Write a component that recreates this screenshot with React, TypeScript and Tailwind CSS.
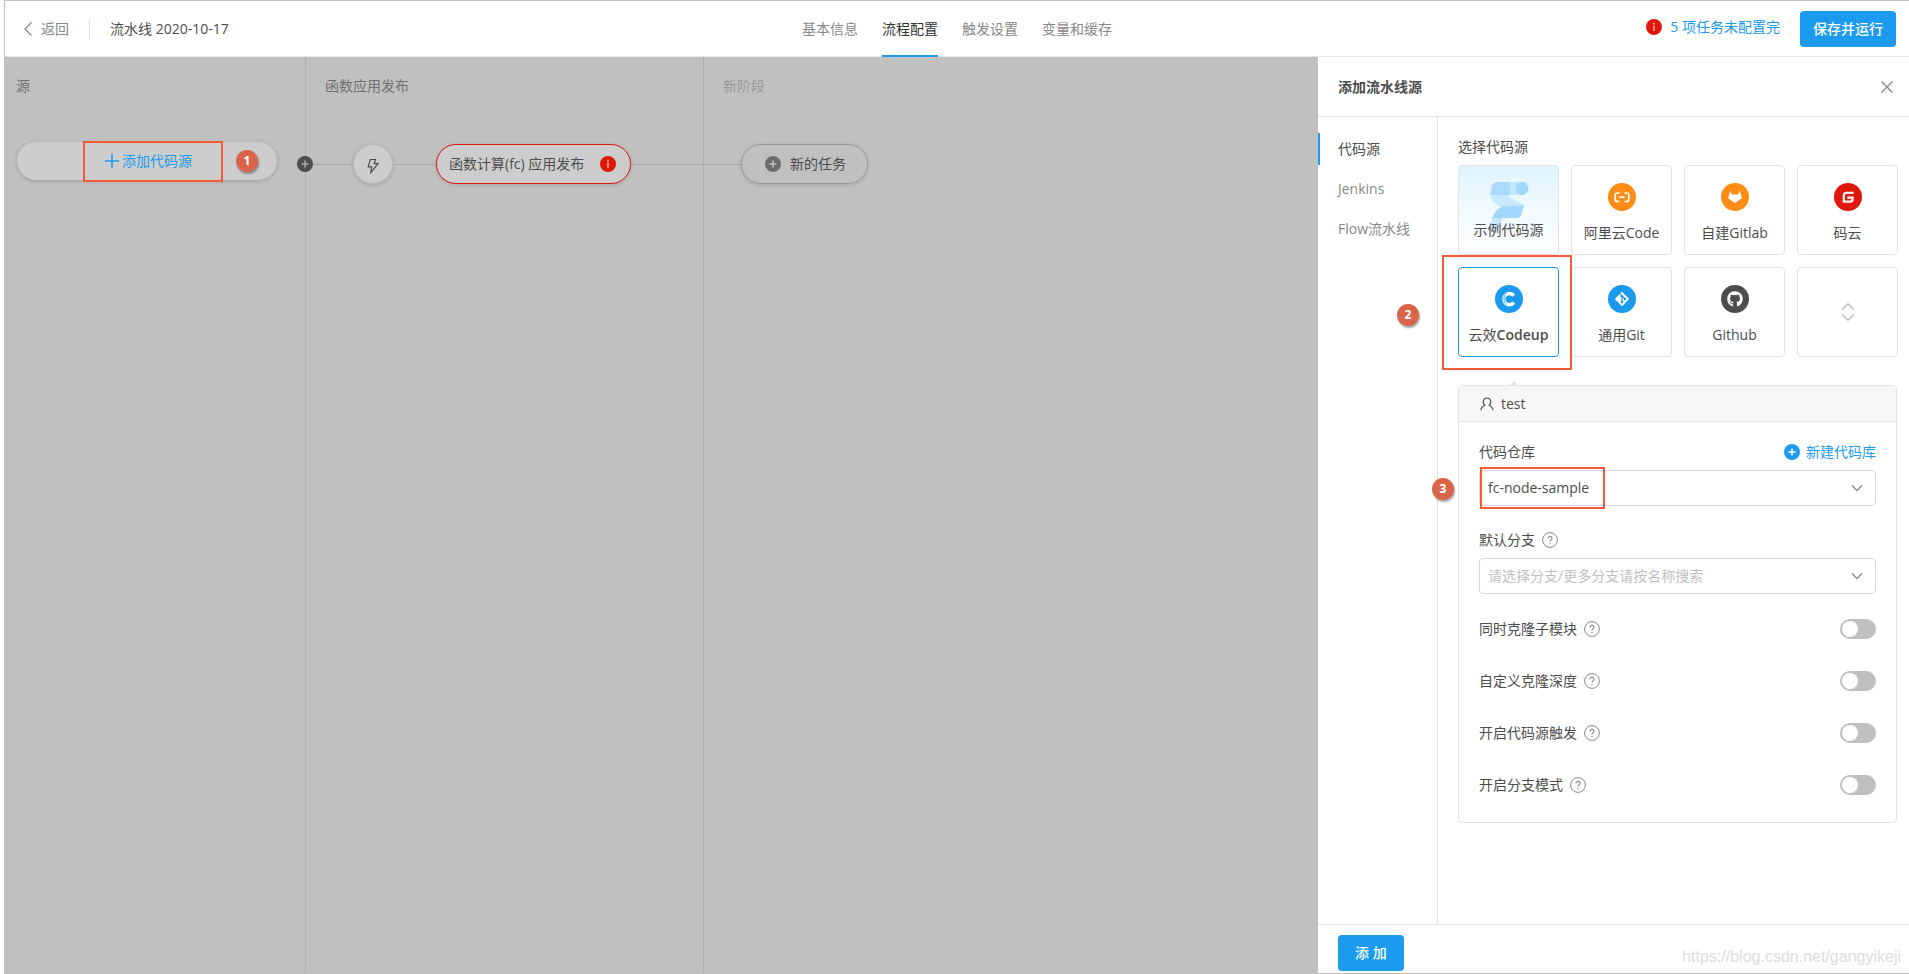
import type { ReactNode } from "react";
import { FaGithub } from "react-icons/fa";

const tabs = ["基本信息", "流程配置", "触发设置", "变量和缓存"];
const sideItems = ["代码源", "Jenkins", "Flow流水线"];
const switches = [
  { id: "submodule", label: "同时克隆子模块" },
  { id: "depth", label: "自定义克隆深度" },
  { id: "trigger", label: "开启代码源触发" },
  { id: "branch-mode", label: "开启分支模式" },
];

function InfoDot() {
  return (
    <svg className="size-4 shrink-0" viewBox="0 0 16 16">
      <circle cx="8" cy="8" r="8" fill="#df170c" />
      <path d="M7.2 3.8h1.6v1.6H7.2zM7.3 6.6h1.4v5.4H7.3z" fill="#f3c3a0" />
    </svg>
  );
}

function PlusDot({ className, stroke }: { className: string; stroke: string }) {
  return (
    <svg className={`size-4 shrink-0 ${className}`} viewBox="0 0 16 16">
      <circle cx="8" cy="8" r="8" fill="currentColor" />
      <path d="M8 4.5v7M4.5 8h7" stroke={stroke} strokeWidth="1.5" />
    </svg>
  );
}

function Help() {
  return (
    <svg className="size-4 shrink-0 text-[#888]" viewBox="0 0 16 16" fill="none" stroke="currentColor">
      <circle cx="8" cy="8" r="7.4" />
      <path d="M6 6.4c0-2.7 4-2.6 4 0 0 1.5-2 1.5-2 3.2M8 11v1.2" strokeWidth="1.1" />
    </svg>
  );
}

function Step({ n, className }: { n: number; className: string }) {
  return (
    <span
      className={`absolute flex size-[22px] items-center justify-center rounded-full bg-[#d9644a] text-xs font-bold text-white shadow-[1px_2px_2px_rgba(0,0,0,0.35)] ${className}`}
    >
      {n}
    </span>
  );
}

function Frame({ className }: { className: string }) {
  return <span className={`pointer-events-none absolute z-10 border-2 border-[#f55a36] ${className}`} />;
}

function Logo({ color, children }: { color: string; children: ReactNode }) {
  return (
    <svg className="size-7" viewBox="0 0 28 28" fill="none">
      <circle cx="14" cy="14" r="14" fill={color} />
      {children}
    </svg>
  );
}

const sources = [
  {
    name: "阿里云Code",
    icon: (
      <Logo color="#fd8d17">
        <path
          d="M11.500 10H9.200C7.800 10 7.200 10.700 7.200 12v4.500c0 1.300.6 2 2 2h2.300M16.500 10h2.300c1.400 0 2 .7 2 2v4.500c0 1.300-.6 2-2 2h-2.300M11.200 14.200h5.600"
          stroke="#fff"
          strokeWidth="1.700"
        />
      </Logo>
    ),
  },
  {
    name: "自建Gitlab",
    icon: (
      <Logo color="#fd8d17">
        <path d="M9.200 8l1.800 3.500h6L18.800 8l2.200 7-7 5.200L7 15z" fill="#fff" />
      </Logo>
    ),
  },
  {
    name: "码云",
    icon: (
      <Logo color="#df170c">
        <path
          d="M19.500 9.800h-7c-1.700 0-2.700 1-2.700 2.700v6.100h6.500c1.500 0 2.200-.8 2.200-2.200v-1.700h-5.200"
          stroke="#fff"
          strokeWidth="2.200"
        />
      </Logo>
    ),
  },
];

function Tile({ name, icon }: { name: string; icon: ReactNode }) {
  return (
    <button className="flex h-[90px] flex-col items-center rounded border border-[#e3e3e3] bg-white pt-[17px]">
      {icon}
      <span className="mt-3 leading-5">{name}</span>
    </button>
  );
}

function Chevron() {
  return (
    <svg
      className="pointer-events-none absolute top-3 right-[13px] size-3 text-[#888]"
      viewBox="0 0 12 12"
      fill="none"
      stroke="currentColor"
      strokeWidth="1.300"
    >
      <path d="M1 3.500l5 5 5-5" />
    </svg>
  );
}

function Header() {
  return (
    <header className="flex h-14 items-center border-b border-[#e5e5e5] bg-white px-[13px] text-[#888]">
      <div className="flex flex-1 items-center">
        <button className="ml-[5px] flex items-center gap-2">
          <svg className="h-4 w-[10px]" viewBox="0 0 10 16" fill="none" stroke="currentColor" strokeWidth="1.200">
            <path d="M8.500 1.500L2 8l6.500 6.500" />
          </svg>
          返回
        </button>
        <span className="mx-5 h-5 w-px bg-[#e0e0e0]" />
        <h1 className="text-[#4d4d4d]">流水线 2020-10-17</h1>
      </div>
      <nav className="flex h-full gap-6">
        {tabs.map((tab) => (
          <a
            key={tab}
            href="#"
            className={
              tab === "流程配置"
                ? "relative flex items-center text-[#333] after:absolute after:inset-x-0 after:-bottom-px after:h-0.5 after:bg-[#1b9aee]"
                : "flex items-center"
            }
          >
            {tab}
          </a>
        ))}
      </nav>
      <div className="flex flex-1 items-center justify-end">
        <a href="#" className="mr-5 flex items-center gap-2 pb-1 text-[#1b9aee]">
          <InfoDot />5 项任务未配置完
        </a>
        <button className="h-9 rounded bg-[#1b9aee] px-[13px] font-medium text-white">保存并运行</button>
      </div>
    </header>
  );
}

function Pipeline() {
  return (
    <main className="flex min-w-0 flex-1 bg-[#c0c0c0]">
      <section className="w-[301px] shrink-0 border-r border-[#adadad]">
        <h2 className="mt-[19px] ml-[11px] leading-5 text-[#707070]">源</h2>
        <div className="relative mt-[46px] ml-3 flex h-[38px] w-[260px] items-center rounded-full bg-[#cdcdcd] shadow-[0_1px_4px_rgba(0,0,0,0.2)]">
          <button className="ml-[88px] flex items-center gap-[3px] text-[#1b9aee]">
            <svg className="size-[14px]" viewBox="0 0 14 14" stroke="currentColor" strokeWidth="1.500">
              <path d="M7 0v14M0 7h14" />
            </svg>
            添加代码源
          </button>
          <Frame className="-top-px left-[66px] h-[41px] w-[140px]" />
          <Step n={1} className="top-2 left-[219px]" />
        </div>
      </section>

      <section className="w-[398px] shrink-0 border-r border-[#adadad]">
        <h2 className="mt-[19px] ml-[19px] leading-5 text-[#707070]">函数应用发布</h2>
        <div className="-ml-[9px] mt-12 flex h-10 items-center">
          <PlusDot className="text-[#4d4d4d]" stroke="#aaa" />
          <span className="h-px w-10 bg-[#a8a8a8]" />
          <button
            aria-label="触发"
            className="flex size-10 items-center justify-center rounded-full border border-[#bababa] bg-[#cdcdcd] shadow-[0_1px_4px_rgba(0,0,0,0.15)]"
          >
            <svg className="mt-1 h-4 w-3" viewBox="0 0 12 16" fill="none" stroke="#4d4d4d" strokeWidth="1.200">
              <path d="M3.300 1.500h5.200L7.200 5.600h4L3.900 14.500l.8-5.600H1.200z" />
            </svg>
          </button>
          <span className="h-px w-[43px] bg-[#a8a8a8]" />
          <button className="flex h-10 w-[195px] items-center justify-between rounded-full border border-[#df170c] bg-[#cdcdcd] pr-[14px] pl-3 shadow-[0_1px_4px_rgba(0,0,0,0.15)]">
            <span>函数计算(fc) 应用发布</span>
            <InfoDot />
          </button>
          <span className="h-px flex-1 bg-[#a8a8a8]" />
        </div>
      </section>

      <section className="min-w-0 flex-1">
        <h2 className="mt-[19px] ml-[19px] leading-5 text-[#999]">新阶段</h2>
        <div className="mt-12 flex h-10 items-center">
          <span className="h-px w-[37px] bg-[#a8a8a8]" />
          <button className="flex h-10 w-[127px] items-center gap-[9px] rounded-full border border-[#999] pl-[23px] shadow-[0_1px_4px_rgba(0,0,0,0.15)]">
            <PlusDot className="text-[#6c6c6c]" stroke="#c0c0c0" />
            新的任务
          </button>
        </div>
      </section>
    </main>
  );
}

function SourceGrid() {
  return (
    <div className="grid grid-cols-4 gap-3">
      <button className="relative flex h-[90px] flex-col items-center rounded border border-[#e3e3e3] bg-linear-to-b from-[#e0f4ff] to-white pt-[54px]">
        <svg className="absolute top-4 left-[29px] h-[52px] w-[42px]" viewBox="0 0 42 52">
          <path d="M10 0h24v13H2l2-9c.7-2.700 3-4 6-4z" fill="#c4e7ff" />
          <path d="M10 0h12v13H2l2-9c.7-2.700 3-4 6-4z" fill="#a9dbff" />
          <path d="M2 13h18c3 4 9 6.500 16 10L14 26C7 21.500 2 18.500 2 13z" fill="#c9e9ff" />
          <path d="M14 25c5-1.800 14 0 22-2l-2.500 9c-.8 3-2.500 4-5.500 4H4c2-5 5-9 10-11z" fill="#9fd7ff" />
          <path d="M4 36h11l-4 10c-1 3-3 4.500-6 4.500H2z" fill="#c6e8ff" />
          <circle cx="34" cy="6.500" r="6.500" fill="#9fd7ff" />
        </svg>
        <span className="relative leading-5">示例代码源</span>
      </button>

      {sources.map((s) => (
        <Tile key={s.name} name={s.name} icon={s.icon} />
      ))}

      <div className="relative">
        <button className="flex h-[90px] w-full flex-col items-center rounded border border-[#1b9aee] bg-white pt-[17px]">
          <Logo color="#1b9aee">
            <path d="M18.800 10.600a5.600 5.600 0 1 0 0 7" stroke="#fff" strokeWidth="3.400" />
            <path d="M12.600 7.600C6.500 9 6.500 19 12.600 20.400c-3-3.400-3-9.400 0-12.800z" fill="#8dcdf7" />
          </Logo>
          <span className="mt-3 leading-5">
            云效<span className="font-semibold">Codeup</span>
          </span>
        </button>
        <Frame className="-top-3 -left-4 h-[115px] w-[130px]" />
        <Step n={2} className="top-[37px] -left-[61px]" />
      </div>
      <Tile
        name="通用Git"
        icon={
          <Logo color="#1b9aee">
            <path d="M14 6.800l7.200 7.200-7.200 7.200L6.800 14z" fill="#fff" />
            <path d="M12 8.800l5 5.200M14 11v6.500" stroke="#1b9aee" strokeWidth="1.200" />
            <circle cx="14" cy="11.200" r="1.300" fill="#1b9aee" />
            <circle cx="14" cy="17" r="1.300" fill="#1b9aee" />
            <circle cx="17" cy="14" r="1.300" fill="#1b9aee" />
          </Logo>
        }
      />
      <Tile
        name="Github"
        icon={
          <span className="flex size-7 items-center justify-center rounded-full bg-[#4d4d4d]">
            <FaGithub className="size-4 text-white" />
          </span>
        }
      />
      <button aria-label="展开" className="flex h-[90px] items-center justify-center rounded border border-[#e3e3e3]">
        <svg className="h-[18px] w-3" viewBox="0 0 12 18" fill="none" stroke="#bbb" strokeWidth="1.500">
          <path d="M0 6.500L6 .9l6 5.600M0 11.500l6 5.600 6-5.600" />
        </svg>
      </button>
    </div>
  );
}

function SourceForm() {
  return (
    <div className="relative mt-7 mr-px rounded border border-[#e3e3e3]">
      <span className="absolute -top-[5px] left-[50px] border-x-[5px] border-b-[5px] border-x-transparent border-b-[#e3e3e3]" />
      <div className="flex h-9 items-center gap-[7px] border-b border-[#e3e3e3] bg-[#f7f7f7] pl-[21px]">
        <svg className="size-[14px]" viewBox="0 0 14 14" fill="none" stroke="#4d4d4d" strokeWidth="1.100">
          <path d="M5 8.300C2 6.500 3 1 7 1s5 5.500 2 7.300M5.400 8.300C3 9 1.300 10 .8 13.300M8.600 8.300c2.400.7 4.100 1.700 4.600 5" />
        </svg>
        test
      </div>
      <div className="px-5 pt-5 pb-[27px]">
        <div className="flex items-center justify-between leading-5">
          <label htmlFor="repo">代码仓库</label>
          <a href="#" className="flex items-center gap-[6px] text-[#1b9aee]">
            <PlusDot className="text-[#1b9aee]" stroke="#fff" />
            新建代码库
          </a>
        </div>
        <div className="relative mt-2">
          <select id="repo" className="h-9 w-full appearance-none rounded border border-[#d9d9d9] bg-white px-2">
            <option>fc-node-sample</option>
          </select>
          <Chevron />
          <Frame className="-top-[3px] left-px h-[42px] w-[125px]" />
          <Step n={3} className="top-2 -left-[47px]" />
        </div>

        <div className="mt-6 flex items-center gap-[7px] leading-5">
          <label htmlFor="branch">默认分支</label>
          <Help />
        </div>
        <div className="relative mt-2">
          <select
            id="branch"
            className="h-9 w-full appearance-none rounded border border-[#d9d9d9] bg-white px-2 text-[#bfbfbf]"
          >
            <option>请选择分支/更多分支请按名称搜索</option>
          </select>
          <Chevron />
        </div>

        <div className="mt-[25px] space-y-8">
          {switches.map((s) => (
            <div key={s.id} className="flex h-5 items-center gap-[7px]">
              <label htmlFor={s.id}>{s.label}</label>
              <Help />
              <input
                id={s.id}
                type="checkbox"
                role="switch"
                className="ml-auto h-5 w-9 appearance-none rounded-full bg-[#bfbfbf] p-0.5 before:block before:size-4 before:rounded-full before:bg-white checked:bg-[#1b9aee] checked:before:translate-x-4"
              />
            </div>
          ))}
        </div>
      </div>
    </div>
  );
}

function Drawer() {
  return (
    <aside className="flex w-[591px] shrink-0 flex-col bg-white">
      <div className="flex h-[60px] items-center justify-between border-b border-[#dedede] pr-4 pl-5">
        <h2 className="font-semibold">添加流水线源</h2>
        <button aria-label="关闭">
          <svg className="size-3" viewBox="0 0 12 12" stroke="#888" strokeWidth="1.300">
            <path d="M.5.5l11 11M11.500.5l-11 11" />
          </svg>
        </button>
      </div>
      <div className="flex flex-1">
        <nav className="flex w-[120px] shrink-0 flex-col gap-2 border-r border-[#e3e3e3] pt-4 text-[#888]">
          {sideItems.map((item) => (
            <a
              key={item}
              href="#"
              className={
                item === "代码源"
                  ? "flex h-8 items-center border-l-2 border-[#1b9aee] pl-[18px] text-[#4d4d4d]"
                  : "flex h-8 items-center pl-5"
              }
            >
              {item}
            </a>
          ))}
        </nav>
        <div className="min-w-0 flex-1 pt-5 pr-[11px] pl-5">
          <p className="mb-2 leading-5">选择代码源</p>
          <SourceGrid />
          <SourceForm />
        </div>
      </div>
      <footer className="flex h-[49px] items-end justify-between border-t border-[#e3e3e3] pr-2 pb-0.5 pl-5">
        <button className="h-9 rounded bg-[#1b9aee] px-[17px] font-medium text-white">添 加</button>
        <span className="pb-0.5 font-[Liberation_Sans] text-base text-[#dcdcdc]">https://blog.csdn.net/gangyikeji</span>
      </footer>
    </aside>
  );
}

export default function App() {
  return (
    <div className="min-h-screen bg-white pl-1 font-['Open_Sans','Noto_Sans_CJK_SC',sans-serif] text-sm text-[#4d4d4d]">
      <div className="flex min-h-screen flex-col border-y border-l border-[#c0c0c0]">
        <Header />
        <div className="flex flex-1">
          <Pipeline />
          <Drawer />
        </div>
      </div>
    </div>
  );
}
